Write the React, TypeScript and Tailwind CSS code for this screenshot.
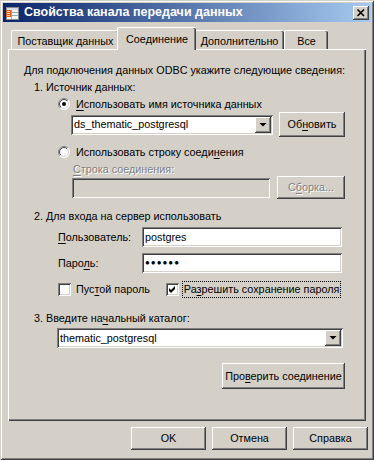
import React from "react";

const RAISED =
  "shadow-[inset_-1px_-1px_0_#404040,inset_1px_1px_0_#ffffff,inset_-2px_-2px_0_#808080,inset_2px_2px_0_#d4d0c8]";
const SUNKEN =
  "shadow-[inset_1px_1px_0_#808080,inset_-1px_-1px_0_#ffffff,inset_2px_2px_0_#404040,inset_-2px_-2px_0_#d4d0c8]";

function U({ children }: { children: React.ReactNode }) {
  return <span className="underline underline-offset-[2px] decoration-1">{children}</span>;
}

function Radio({ checked, id }: { checked?: boolean; id: string }) {
  return (
    <svg width="12" height="12" viewBox="0 0 12 12" className="shrink-0">
      <defs>
        <linearGradient id={`o${id}`} x1="0" y1="0" x2="1" y2="1">
          <stop offset="0.5" stopColor="#808080" />
          <stop offset="0.5" stopColor="#ffffff" />
        </linearGradient>
        <linearGradient id={`i${id}`} x1="0" y1="0" x2="1" y2="1">
          <stop offset="0.5" stopColor="#404040" />
          <stop offset="0.5" stopColor="#d4d0c8" />
        </linearGradient>
      </defs>
      <circle cx="6" cy="6" r="5.5" fill="#ffffff" stroke={`url(#o${id})`} strokeWidth="1" />
      <circle cx="6" cy="6" r="4.5" fill="#ffffff" stroke={`url(#i${id})`} strokeWidth="1" />
      {checked && <circle cx="6" cy="6" r="2" fill="#000000" />}
    </svg>
  );
}

function Checkbox({ checked }: { checked?: boolean }) {
  return (
    <div className={`w-[13px] h-[13px] bg-white shrink-0 ${SUNKEN}`}>
      {checked && (
        <svg width="13" height="13" viewBox="0 0 13 13">
          <polygon points="3,5 5,7 9,3 9,6 5,10 3,8" fill="#000" />
        </svg>
      )}
    </div>
  );
}

function Button({
  children,
  className = "",
  disabled,
}: {
  children: React.ReactNode;
  className?: string;
  disabled?: boolean;
}) {
  return (
    <div
      className={`flex items-center justify-center bg-[#d4d0c8] ${RAISED} ${
        disabled ? "text-[#808080] [text-shadow:1px_1px_0_#ffffff]" : "text-black"
      } ${className}`}
    >
      {children}
    </div>
  );
}

function Combo({ value, className = "" }: { value: string; className?: string }) {
  return (
    <div className={`flex items-center bg-white p-[2px] ${SUNKEN} ${className}`}>
      <div className="flex-1 pl-[1px] leading-none">{value}</div>
      <div className={`w-[16px] h-[16px] bg-[#d4d0c8] ${RAISED} flex items-center justify-center`}>
        <svg width="16" height="16" viewBox="0 0 16 16">
          <polygon points="4.5,6 11.5,6 8,9.5" fill="#000" />
        </svg>
      </div>
    </div>
  );
}

function TextBox({
  children,
  className = "",
  disabled,
}: {
  children?: React.ReactNode;
  className?: string;
  disabled?: boolean;
}) {
  return (
    <div
      className={`flex items-center px-[3px] ${disabled ? "bg-[#d4d0c8]" : "bg-white"} ${SUNKEN} ${className}`}
    >
      {children}
    </div>
  );
}

function Tab({
  label,
  selected,
  className = "",
}: {
  label: string;
  selected?: boolean;
  className?: string;
}) {
  return (
    <div
      className={`flex items-start justify-center bg-[#d4d0c8] border-l border-t border-white rounded-tl-[2px] rounded-tr-[2px] shadow-[inset_-1px_0_0_#404040,inset_-2px_0_0_#808080] ${
        selected
          ? "relative z-10 h-[23px] -mb-px -mx-[2px] pt-[3px]"
          : "h-[19px] pt-[2px]"
      } ${className}`}
    >
      {label}
    </div>
  );
}

export default function App() {
  return (
    <div
      className="w-[374px] h-[460px] bg-[#d4d0c8] p-[3px] flex flex-col text-[10.8px] text-black shadow-[inset_1px_1px_0_#d4d0c8,inset_-1px_-1px_0_#404040,inset_2px_2px_0_#ffffff,inset_-2px_-2px_0_#808080]"
      style={{ fontFamily: '"Liberation Sans", Arial, sans-serif' }}
    >
      {/* Title bar */}
      <div className="h-[19px] flex items-center bg-[linear-gradient(to_right,#0a246a,#a6caf0)] pl-[2px] pr-[2px] shrink-0">
        <svg width="16" height="16" viewBox="0 0 16 16" className="shrink-0">
          <rect x="1.5" y="2.5" width="12" height="12" fill="#f4f4f4" stroke="#8a8a8a" />
          <rect x="2" y="3" width="11" height="2" fill="#d8d8e8" />
          <line x1="2" y1="7.5" x2="13" y2="7.5" stroke="#9aa" />
          <line x1="2" y1="10.5" x2="13" y2="10.5" stroke="#9aa" />
          <line x1="6.5" y1="5" x2="6.5" y2="14" stroke="#9aa" />
          <rect x="1" y="5" width="5" height="7" fill="#e06020" />
          <rect x="2" y="6" width="3" height="1" fill="#ffd0a0" />
          <rect x="2" y="8" width="3" height="1" fill="#ffd0a0" />
          <rect x="2" y="10" width="3" height="1" fill="#ffd0a0" />
        </svg>
        <div className="ml-[3px] text-white font-bold text-[12.5px] leading-none flex-1">
          Свойства канала передачи данных
        </div>
        <div className={`w-[16px] h-[14px] bg-[#d4d0c8] ${RAISED} flex items-center justify-center`}>
          <svg width="16" height="14" viewBox="0 0 16 14">
            <path d="M4.5 3.5 L11 10 M11 3.5 L4.5 10" stroke="#000" strokeWidth="1.6" />
          </svg>
        </div>
      </div>

      {/* Tabs */}
      <div className="h-[27px] flex items-end pl-[8px] shrink-0">
        <Tab label="Поставщик данных" className="w-[108px]" />
        <Tab label="Соединение" selected className="w-[79px]" />
        <Tab label="Дополнительно" className="w-[90px]" />
        <Tab label="Все" className="w-[44px]" />
      </div>

      {/* Panel */}
      <div className="mx-[5px] h-[372px] flex flex-col pl-[1px] shadow-[inset_1px_1px_0_#ffffff,inset_-1px_-1px_0_#404040,inset_-2px_-2px_0_#808080] shrink-0">
        <div className="mt-[14px] h-[14px] flex items-center ml-[15px]">
          Для подключения данных ODBC укажите следующие сведения:
        </div>
        <div className="mt-[3px] h-[14px] flex items-center ml-[25px]">1. Источник данных:</div>
        <div className="mt-[3px] h-[14px] flex items-center ml-[49px]">
          <Radio checked id="r1" />
          <span className="ml-[6px]">
            <U>И</U>спользовать имя источника данных
          </span>
        </div>
        <div className="mt-[1px] h-[25px] flex items-center ml-[62px]">
          <Combo value="ds_thematic_postgresql" className="w-[202px] h-[20px]" />
          <Button className="ml-[6px] w-[66px] h-[25px]">
            <span>
              Об<U>н</U>овить
            </span>
          </Button>
        </div>
        <div className="mt-[8px] h-[14px] flex items-center ml-[49px]">
          <Radio id="r2" />
          <span className="ml-[6px]">
            Использовать строку соеди<U>н</U>ения
          </span>
        </div>
        <div className="mt-[3px] h-[14px] flex items-center ml-[64px] text-[#808080] [text-shadow:1px_1px_0_#ffffff]">
          <span>
            <U>С</U>трока соединения:
          </span>
        </div>
        <div className="h-[23px] flex items-center ml-[63px]">
          <TextBox disabled className="w-[198px] h-[20px]" />
          <Button disabled className="ml-[7px] w-[68px] h-[23px]">
            <span>
              С<U>б</U>орка...
            </span>
          </Button>
        </div>
        <div className="mt-[10px] h-[14px] flex items-center ml-[25px]">2. Для входа на сервер использовать</div>
        <div className="mt-[4px] h-[20px] flex items-center ml-[49px]">
          <span className="w-[84px]">
            <U>П</U>ользователь:
          </span>
          <TextBox className="w-[200px] h-[20px]">postgres</TextBox>
        </div>
        <div className="mt-[6px] h-[20px] flex items-center ml-[49px]">
          <span className="w-[84px]">
            Паро<U>л</U>ь:
          </span>
          <TextBox className="w-[200px] h-[20px]">
            <span className="text-[8px] tracking-[1px]">●●●●●●</span>
          </TextBox>
        </div>
        <div className="mt-[7px] h-[18px] flex items-center ml-[49px]">
          <Checkbox />
          <span className="ml-[5px]">
            Пус<U>т</U>ой пароль
          </span>
          <div className="ml-[16px]">
            <Checkbox checked />
          </div>
          <span className="ml-[3px] border border-dotted border-black px-[1px] leading-[15px]">
            Ра<U>з</U>решить сохранение пароля
          </span>
        </div>
        <div className="mt-[13px] h-[14px] flex items-center ml-[25px]">
          <span>
            3. Введите на<U>ч</U>альный каталог:
          </span>
        </div>
        <div className="mt-[3px] h-[20px] flex items-center ml-[48px]">
          <Combo value="thematic_postgresql" className="w-[286px] h-[20px]" />
        </div>
        <div className="mt-[15px] h-[26px] flex items-center ml-[213px]">
          <Button className="w-[123px] h-[26px]">
            <span>
              Про<U>в</U>ерить соединение
            </span>
          </Button>
        </div>
      </div>

      {/* Bottom buttons */}
      <div className="mt-[6px] flex justify-end gap-[6px] pr-[3px]">
        <Button className="w-[75px] h-[23px]">OK</Button>
        <Button className="w-[75px] h-[23px]">Отмена</Button>
        <Button className="w-[75px] h-[23px]">Справка</Button>
      </div>
    </div>
  );
}
